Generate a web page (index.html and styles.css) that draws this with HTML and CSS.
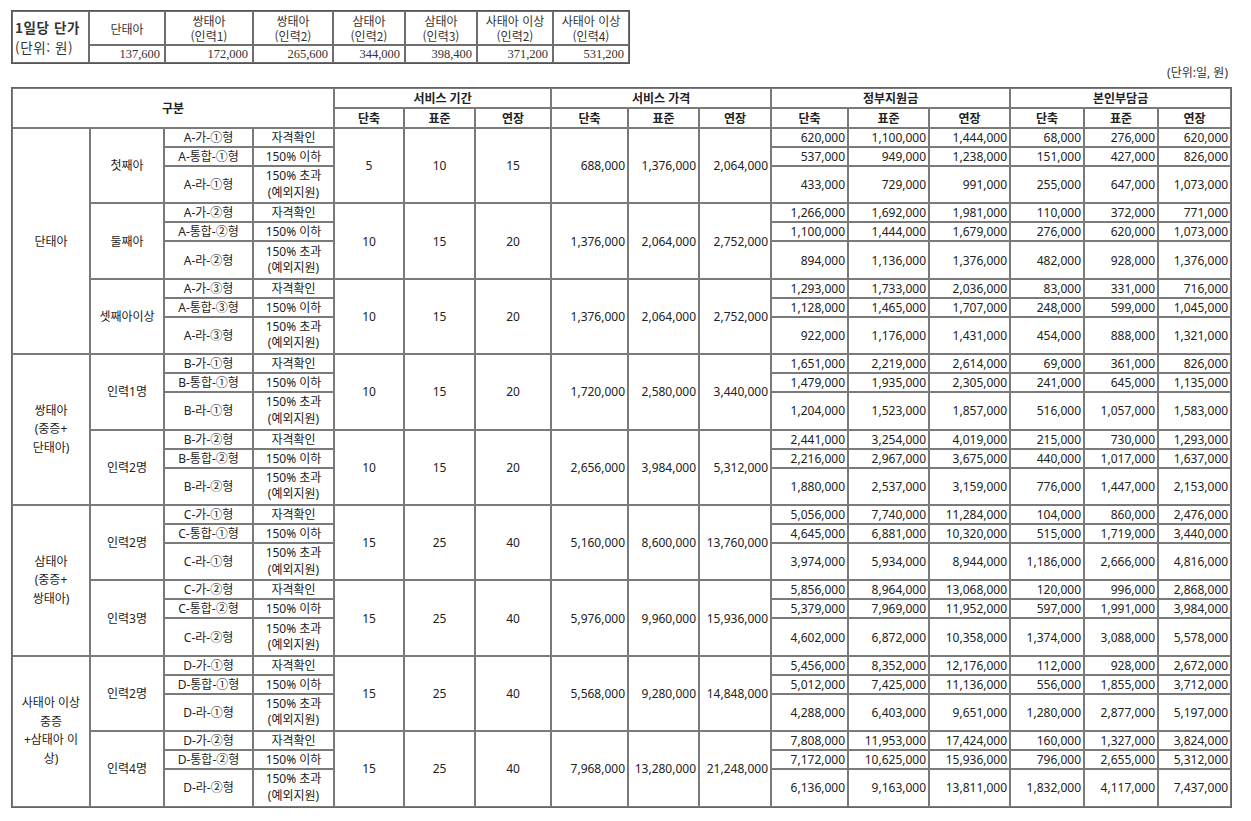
FILE: index.html
```html
<!DOCTYPE html>
<html lang="ko">
<head>
<meta charset="utf-8">
<title>서비스 가격표</title>
<link rel="stylesheet" href="styles.css">
</head>
<body>
<div class="page">
<table class="rate">
<colgroup><col style="width:77px"><col style="width:76px"><col style="width:88px"><col style="width:80px"><col style="width:72px"><col style="width:72px"><col style="width:76px"><col style="width:76px"></colgroup>
<tr class="rh">
<td rowspan="2" class="lbl"><b>1일당 단가</b><br>(단위: 원)</td>
<td>단태아</td>
<td>쌍태아<br>(인력1)</td>
<td>쌍태아<br>(인력2)</td>
<td>삼태아<br>(인력2)</td>
<td>삼태아<br>(인력3)</td>
<td>사태아 이상<br>(인력2)</td>
<td>사태아 이상<br>(인력4)</td>
</tr>
<tr class="rv">
<td class="v">137,600</td><td class="v">172,000</td><td class="v">265,600</td><td class="v">344,000</td><td class="v">398,400</td><td class="v">371,200</td><td class="v">531,200</td>
</tr>
</table>
<div class="unit">(단위:일, 원)</div>
<table class="fee">
<colgroup><col style="width:78px"><col style="width:74px"><col style="width:89px"><col style="width:81px"><col style="width:70px"><col style="width:71px"><col style="width:76px"><col style="width:77px"><col style="width:71px"><col style="width:72px"><col style="width:77px"><col style="width:81px"><col style="width:81px"><col style="width:74px"><col style="width:74px"><col style="width:73px"></colgroup>
<thead>
<tr class="hd"><th colspan="4" rowspan="2">구분</th><th colspan="3">서비스 기간</th><th colspan="3">서비스 가격</th><th colspan="3">정부지원금</th><th colspan="3">본인부담금</th></tr>
<tr class="hd"><th>단축</th><th>표준</th><th>연장</th><th>단축</th><th>표준</th><th>연장</th><th>단축</th><th>표준</th><th>연장</th><th>단축</th><th>표준</th><th>연장</th></tr>
</thead>
<tbody>
<tr class="r1"><td rowspan="9">단태아</td><td rowspan="3">첫째아</td><td>A-가-①형</td><td>자격확인</td><td rowspan="3">5</td><td rowspan="3">10</td><td rowspan="3">15</td><td rowspan="3" class="n">688,000</td><td rowspan="3" class="n">1,376,000</td><td rowspan="3" class="n">2,064,000</td><td class="n">620,000</td><td class="n">1,100,000</td><td class="n">1,444,000</td><td class="n">68,000</td><td class="n">276,000</td><td class="n">620,000</td></tr>
<tr class="r1"><td>A-통합-①형</td><td>150% 이하</td><td class="n">537,000</td><td class="n">949,000</td><td class="n">1,238,000</td><td class="n">151,000</td><td class="n">427,000</td><td class="n">826,000</td></tr>
<tr class="r2"><td>A-라-①형</td><td class="two">150% 초과<br>(예외지원)</td><td class="n">433,000</td><td class="n">729,000</td><td class="n">991,000</td><td class="n">255,000</td><td class="n">647,000</td><td class="n">1,073,000</td></tr>

<tr class="r1"><td rowspan="3">둘째아</td><td>A-가-②형</td><td>자격확인</td><td rowspan="3">10</td><td rowspan="3">15</td><td rowspan="3">20</td><td rowspan="3" class="n">1,376,000</td><td rowspan="3" class="n">2,064,000</td><td rowspan="3" class="n">2,752,000</td><td class="n">1,266,000</td><td class="n">1,692,000</td><td class="n">1,981,000</td><td class="n">110,000</td><td class="n">372,000</td><td class="n">771,000</td></tr>
<tr class="r1"><td>A-통합-②형</td><td>150% 이하</td><td class="n">1,100,000</td><td class="n">1,444,000</td><td class="n">1,679,000</td><td class="n">276,000</td><td class="n">620,000</td><td class="n">1,073,000</td></tr>
<tr class="r2"><td>A-라-②형</td><td class="two">150% 초과<br>(예외지원)</td><td class="n">894,000</td><td class="n">1,136,000</td><td class="n">1,376,000</td><td class="n">482,000</td><td class="n">928,000</td><td class="n">1,376,000</td></tr>

<tr class="r1"><td rowspan="3">셋째아이상</td><td>A-가-③형</td><td>자격확인</td><td rowspan="3">10</td><td rowspan="3">15</td><td rowspan="3">20</td><td rowspan="3" class="n">1,376,000</td><td rowspan="3" class="n">2,064,000</td><td rowspan="3" class="n">2,752,000</td><td class="n">1,293,000</td><td class="n">1,733,000</td><td class="n">2,036,000</td><td class="n">83,000</td><td class="n">331,000</td><td class="n">716,000</td></tr>
<tr class="r1"><td>A-통합-③형</td><td>150% 이하</td><td class="n">1,128,000</td><td class="n">1,465,000</td><td class="n">1,707,000</td><td class="n">248,000</td><td class="n">599,000</td><td class="n">1,045,000</td></tr>
<tr class="r2"><td>A-라-③형</td><td class="two">150% 초과<br>(예외지원)</td><td class="n">922,000</td><td class="n">1,176,000</td><td class="n">1,431,000</td><td class="n">454,000</td><td class="n">888,000</td><td class="n">1,321,000</td></tr>

<tr class="r1"><td rowspan="6" class="cat">쌍태아<br>(중증+<br>단태아)</td><td rowspan="3">인력1명</td><td>B-가-①형</td><td>자격확인</td><td rowspan="3">10</td><td rowspan="3">15</td><td rowspan="3">20</td><td rowspan="3" class="n">1,720,000</td><td rowspan="3" class="n">2,580,000</td><td rowspan="3" class="n">3,440,000</td><td class="n">1,651,000</td><td class="n">2,219,000</td><td class="n">2,614,000</td><td class="n">69,000</td><td class="n">361,000</td><td class="n">826,000</td></tr>
<tr class="r1"><td>B-통합-①형</td><td>150% 이하</td><td class="n">1,479,000</td><td class="n">1,935,000</td><td class="n">2,305,000</td><td class="n">241,000</td><td class="n">645,000</td><td class="n">1,135,000</td></tr>
<tr class="r2"><td>B-라-①형</td><td class="two">150% 초과<br>(예외지원)</td><td class="n">1,204,000</td><td class="n">1,523,000</td><td class="n">1,857,000</td><td class="n">516,000</td><td class="n">1,057,000</td><td class="n">1,583,000</td></tr>

<tr class="r1"><td rowspan="3">인력2명</td><td>B-가-②형</td><td>자격확인</td><td rowspan="3">10</td><td rowspan="3">15</td><td rowspan="3">20</td><td rowspan="3" class="n">2,656,000</td><td rowspan="3" class="n">3,984,000</td><td rowspan="3" class="n">5,312,000</td><td class="n">2,441,000</td><td class="n">3,254,000</td><td class="n">4,019,000</td><td class="n">215,000</td><td class="n">730,000</td><td class="n">1,293,000</td></tr>
<tr class="r1"><td>B-통합-②형</td><td>150% 이하</td><td class="n">2,216,000</td><td class="n">2,967,000</td><td class="n">3,675,000</td><td class="n">440,000</td><td class="n">1,017,000</td><td class="n">1,637,000</td></tr>
<tr class="r2"><td>B-라-②형</td><td class="two">150% 초과<br>(예외지원)</td><td class="n">1,880,000</td><td class="n">2,537,000</td><td class="n">3,159,000</td><td class="n">776,000</td><td class="n">1,447,000</td><td class="n">2,153,000</td></tr>

<tr class="r1"><td rowspan="6" class="cat">삼태아<br>(중증+<br>쌍태아)</td><td rowspan="3">인력2명</td><td>C-가-①형</td><td>자격확인</td><td rowspan="3">15</td><td rowspan="3">25</td><td rowspan="3">40</td><td rowspan="3" class="n">5,160,000</td><td rowspan="3" class="n">8,600,000</td><td rowspan="3" class="n">13,760,000</td><td class="n">5,056,000</td><td class="n">7,740,000</td><td class="n">11,284,000</td><td class="n">104,000</td><td class="n">860,000</td><td class="n">2,476,000</td></tr>
<tr class="r1"><td>C-통합-①형</td><td>150% 이하</td><td class="n">4,645,000</td><td class="n">6,881,000</td><td class="n">10,320,000</td><td class="n">515,000</td><td class="n">1,719,000</td><td class="n">3,440,000</td></tr>
<tr class="r2"><td>C-라-①형</td><td class="two">150% 초과<br>(예외지원)</td><td class="n">3,974,000</td><td class="n">5,934,000</td><td class="n">8,944,000</td><td class="n">1,186,000</td><td class="n">2,666,000</td><td class="n">4,816,000</td></tr>

<tr class="r1"><td rowspan="3">인력3명</td><td>C-가-②형</td><td>자격확인</td><td rowspan="3">15</td><td rowspan="3">25</td><td rowspan="3">40</td><td rowspan="3" class="n">5,976,000</td><td rowspan="3" class="n">9,960,000</td><td rowspan="3" class="n">15,936,000</td><td class="n">5,856,000</td><td class="n">8,964,000</td><td class="n">13,068,000</td><td class="n">120,000</td><td class="n">996,000</td><td class="n">2,868,000</td></tr>
<tr class="r1"><td>C-통합-②형</td><td>150% 이하</td><td class="n">5,379,000</td><td class="n">7,969,000</td><td class="n">11,952,000</td><td class="n">597,000</td><td class="n">1,991,000</td><td class="n">3,984,000</td></tr>
<tr class="r2"><td>C-라-②형</td><td class="two">150% 초과<br>(예외지원)</td><td class="n">4,602,000</td><td class="n">6,872,000</td><td class="n">10,358,000</td><td class="n">1,374,000</td><td class="n">3,088,000</td><td class="n">5,578,000</td></tr>

<tr class="r1"><td rowspan="6" class="cat">사태아 이상<br>중증<br>+삼태아 이<br>상)</td><td rowspan="3">인력2명</td><td>D-가-①형</td><td>자격확인</td><td rowspan="3">15</td><td rowspan="3">25</td><td rowspan="3">40</td><td rowspan="3" class="n">5,568,000</td><td rowspan="3" class="n">9,280,000</td><td rowspan="3" class="n">14,848,000</td><td class="n">5,456,000</td><td class="n">8,352,000</td><td class="n">12,176,000</td><td class="n">112,000</td><td class="n">928,000</td><td class="n">2,672,000</td></tr>
<tr class="r1"><td>D-통합-①형</td><td>150% 이하</td><td class="n">5,012,000</td><td class="n">7,425,000</td><td class="n">11,136,000</td><td class="n">556,000</td><td class="n">1,855,000</td><td class="n">3,712,000</td></tr>
<tr class="r2"><td>D-라-①형</td><td class="two">150% 초과<br>(예외지원)</td><td class="n">4,288,000</td><td class="n">6,403,000</td><td class="n">9,651,000</td><td class="n">1,280,000</td><td class="n">2,877,000</td><td class="n">5,197,000</td></tr>

<tr class="r1"><td rowspan="3">인력4명</td><td>D-가-②형</td><td>자격확인</td><td rowspan="3">15</td><td rowspan="3">25</td><td rowspan="3">40</td><td rowspan="3" class="n">7,968,000</td><td rowspan="3" class="n">13,280,000</td><td rowspan="3" class="n">21,248,000</td><td class="n">7,808,000</td><td class="n">11,953,000</td><td class="n">17,424,000</td><td class="n">160,000</td><td class="n">1,327,000</td><td class="n">3,824,000</td></tr>
<tr class="r1"><td>D-통합-②형</td><td>150% 이하</td><td class="n">7,172,000</td><td class="n">10,625,000</td><td class="n">15,936,000</td><td class="n">796,000</td><td class="n">2,655,000</td><td class="n">5,312,000</td></tr>
<tr class="r2"><td>D-라-②형</td><td class="two">150% 초과<br>(예외지원)</td><td class="n">6,136,000</td><td class="n">9,163,000</td><td class="n">13,811,000</td><td class="n">1,832,000</td><td class="n">4,117,000</td><td class="n">7,437,000</td></tr>
</tbody>
</table>
</div>
</body>
</html>
```
FILE: styles.css
```css
* { box-sizing: border-box; }
body {
  margin: 0;
  background: #fff;
  color: #222;
  font-family: "Noto Sans", "Noto Sans CJK KR", sans-serif;
  font-size: 12px;
}
.page {
  padding: 10px 0 0 11px;
  width: 1240px;
}
table {
  border-collapse: separate;
  border-spacing: 0;
  table-layout: fixed;
}

/* top rate table */
.rate {
  width: 617px;
  border: 1px solid #555;
  font-family: "Noto Sans CJK KR", sans-serif;
  color: #333;
}
.rate td {
  border: 1px solid #6e6e6e;
  padding: 0 3px;
  text-align: center;
  vertical-align: middle;
  font-size: 12px;
  line-height: 15px;
  white-space: nowrap;
}
.rate .rh td { height: 34px; }
.rate .rv td { height: 18px; }
.rate .lbl {
  text-align: left;
  font-size: 13.5px;
  line-height: 20px;
  letter-spacing: 0.6px;
  padding-left: 2px;
}
.rate .lbl b { font-weight: 700; }
.rate .v {
  text-align: right;
  font-family: "Liberation Serif", serif;
  font-size: 12.5px;
  padding-right: 4px;
}

.unit {
  width: 1217px;
  text-align: right;
  height: 23px;
  line-height: 18px;
  color: #333;
}

/* main fee table */
.fee {
  width: 1219px;
  border: 1px solid #666;
}
.fee th,
.fee td {
  border: 1px solid #7a7a7a;
  padding: 0 2px;
  text-align: center;
  vertical-align: middle;
  line-height: 15px;
  white-space: nowrap;
  font-size: 12px;
}
.fee th {
  font-weight: 700;
  height: 20px;
  color: #222;
}
.fee .r1 td { height: 19px; }
.fee .r2 td { height: 37.4px; }
.fee td.two { line-height: 16.5px; }
.fee td.cat { line-height: 18.5px; }
.fee td.n {
  text-align: right;
  padding-right: 2px;
}
```
